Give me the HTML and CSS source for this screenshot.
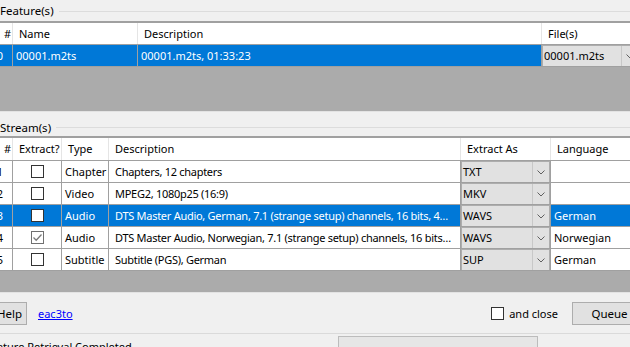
FILE: index.html
```html
<!DOCTYPE html>
<html lang="en">
<head>
  <meta charset="UTF-8">
  <title>eac3to Stream Selection</title>
  <link rel="stylesheet" href="styles.css">
</head>
<body>
  <div id="app">
    <div class="group-head"><span class="group-label">Feature(s)</span></div>
    <div class="grid feature-grid">
      <div class="row head">
        <div class="cell num">#</div>
        <div class="cell">Name</div>
        <div class="cell">Description</div>
        <div class="cell">File(s)</div>
      </div>
      <div class="row selected">
        <div class="cell num">0</div>
        <div class="cell">00001.m2ts</div>
        <div class="cell">00001.m2ts, 01:33:23</div>
        <div class="cell combo-cell">
          <div class="combo"><span class="combo-text">00001.m2ts</span><span class="combo-btn"><svg width="8" height="5" viewBox="0 0 8 5"><path d="M0.5 0.5 L4 4 L7.5 0.5" fill="none" stroke="#606060"/></svg></span></div>
        </div>
      </div>
      <div class="empty feature-empty"></div>
    </div>

    <div class="group-head stream-head"><span class="group-label">Stream(s)</span></div>
    <div class="grid stream-grid">
      <div class="row head">
        <div class="cell num">#</div>
        <div class="cell">Extract?</div>
        <div class="cell">Type</div>
        <div class="cell desc">Description</div>
        <div class="cell">Extract As</div>
        <div class="cell">Language</div>
      </div>
      <div class="row">
        <div class="cell num">1</div>
        <div class="cell check-cell"><span class="check"></span></div>
        <div class="cell">Chapter</div>
        <div class="cell desc">Chapters, 12 chapters</div>
        <div class="cell combo-cell"><div class="combo"><span class="combo-text">TXT</span><span class="combo-btn"><svg width="8" height="5" viewBox="0 0 8 5"><path d="M0.5 0.5 L4 4 L7.5 0.5" fill="none" stroke="#606060"/></svg></span></div></div>
        <div class="cell"></div>
      </div>
      <div class="row">
        <div class="cell num">2</div>
        <div class="cell check-cell"><span class="check"></span></div>
        <div class="cell">Video</div>
        <div class="cell desc">MPEG2, 1080p25 (16:9)</div>
        <div class="cell combo-cell"><div class="combo"><span class="combo-text">MKV</span><span class="combo-btn"><svg width="8" height="5" viewBox="0 0 8 5"><path d="M0.5 0.5 L4 4 L7.5 0.5" fill="none" stroke="#606060"/></svg></span></div></div>
        <div class="cell"></div>
      </div>
      <div class="row selected">
        <div class="cell num">3</div>
        <div class="cell check-cell"><span class="check"></span></div>
        <div class="cell">Audio</div>
        <div class="cell desc">DTS Master Audio, German, 7.1 (strange setup) channels, 16 bits, 4…</div>
        <div class="cell combo-cell"><div class="combo"><span class="combo-text">WAVS</span><span class="combo-btn"><svg width="8" height="5" viewBox="0 0 8 5"><path d="M0.5 0.5 L4 4 L7.5 0.5" fill="none" stroke="#606060"/></svg></span></div></div>
        <div class="cell">German</div>
      </div>
      <div class="row">
        <div class="cell num">4</div>
        <div class="cell check-cell"><span class="check checked"><svg width="11" height="11" viewBox="0 0 11 11"><path d="M1.5 5.5 L4.2 8.2 L9.5 2.5" fill="none" stroke="#7a7a7a" stroke-width="1.3"/></svg></span></div>
        <div class="cell">Audio</div>
        <div class="cell desc">DTS Master Audio, Norwegian, 7.1 (strange setup) channels, 16 bits…</div>
        <div class="cell combo-cell"><div class="combo"><span class="combo-text">WAVS</span><span class="combo-btn"><svg width="8" height="5" viewBox="0 0 8 5"><path d="M0.5 0.5 L4 4 L7.5 0.5" fill="none" stroke="#606060"/></svg></span></div></div>
        <div class="cell">Norwegian</div>
      </div>
      <div class="row">
        <div class="cell num">5</div>
        <div class="cell check-cell"><span class="check"></span></div>
        <div class="cell">Subtitle</div>
        <div class="cell desc">Subtitle (PGS), German</div>
        <div class="cell combo-cell"><div class="combo"><span class="combo-text">SUP</span><span class="combo-btn"><svg width="8" height="5" viewBox="0 0 8 5"><path d="M0.5 0.5 L4 4 L7.5 0.5" fill="none" stroke="#606060"/></svg></span></div></div>
        <div class="cell">German</div>
      </div>
      <div class="empty stream-empty"></div>
    </div>

    <div class="actions">
      <button class="btn help-btn">Help</button>
      <a class="link" href="#">eac3to</a>
      <label class="close-opt"><span class="check"></span>and close</label>
      <button class="btn queue-btn">Queue</button>
    </div>

    <div class="status">
      <span class="status-text">Feature Retrieval Completed</span>
      <div class="progress"></div>
    </div>
  </div>
</body>
</html>
```

FILE: styles.css
```css
body {
  margin: 0;
  background-color: #f0f0f0;
  font-family: "Noto Sans", sans-serif;
  font-size: 11px;
  color: #000;
  overflow: hidden;
}
#app {
  width: 630px;
  height: 347px;
  overflow: hidden;
}
.group-head {
  display: flex;
  align-items: center;
  height: 21px;
  font-size: 11.5px;
}
.group-head::after {
  content: "";
  flex: 1;
  border-top: 1px solid #dcdcdc;
  margin-left: 5px;
  margin-top: 1px;
}
.group-label {
  white-space: nowrap;
}
.stream-head {
  height: 24px;
  padding-top: 6px;
  box-sizing: border-box;
}
.grid {
  border-top: 2px solid #a0a0a0;
  border-bottom: 1px solid #e3e3e3;
  margin-left: -16px;
  width: 760px;
}
.row {
  display: grid;
  height: 22px;
  border-bottom: 1px solid #a0a0a0;
  box-sizing: border-box;
  background-color: #fff;
}
.feature-grid .row {
  grid-template-columns: 29px 125px 404px 98px;
}
.stream-grid .row {
  grid-template-columns: 29px 49px 47px 352px 90px 150px;
}
.stream-grid .head {
  height: 23px;
}
.cell {
  border-right: 1px solid #a0a0a0;
  padding-left: 3px;
  line-height: 21px;
  white-space: nowrap;
  overflow: hidden;
  text-overflow: ellipsis;
}
.cell.desc {
  padding-left: 6px;
  padding-right: 0;
  letter-spacing: -0.28px;
}
.head .cell {
  border-right-color: #e5e5e5;
  padding-left: 6px;
  letter-spacing: 0;
}
.num {
  text-align: right;
  padding-right: 9px;
}
.head .num {
  padding-right: 1px;
}
.selected {
  background-color: #0078d7;
  color: #fff;
}
.empty {
  background-color: #ababab;
}
.feature-empty {
  height: 44px;
}
.stream-empty {
  height: 21px;
}
.check-cell {
  display: flex;
  justify-content: center;
  align-items: center;
  padding-left: 0;
}
.check {
  width: 13px;
  height: 13px;
  box-sizing: border-box;
  border: 1px solid #333;
  background-color: #fff;
  display: inline-flex;
  align-items: center;
  justify-content: center;
}
.check.checked {
  border-color: #707070;
}
.combo-cell {
  padding-left: 0;
}
.combo {
  display: flex;
  height: 100%;
  box-sizing: border-box;
  border: 1px solid #adadad;
  border-bottom: none;
  background-color: #e1e1e1;
  color: #000;
}
.combo-text {
  flex: 1;
  padding-left: 1px;
  line-height: 20px;
  overflow: hidden;
}
.combo-btn {
  width: 16px;
  border-left: 1px solid #c8c8c8;
  display: flex;
  align-items: center;
  justify-content: center;
}
.actions {
  display: flex;
  align-items: center;
  height: 40px;
  border-bottom: 1px solid #dadada;
}
.btn {
  font-family: "Noto Sans", sans-serif;
  font-size: 11.5px;
  height: 23px;
  background-color: #e1e1e1;
  border: 1px solid #adadad;
  padding: 0;
  color: #000;
}
.help-btn {
  width: 35px;
  margin-left: -8px;
}
.link {
  color: #0000ff;
  margin-left: 11px;
}
.close-opt {
  display: flex;
  align-items: center;
  gap: 5px;
  margin-left: auto;
}
.close-opt .check {
  margin-top: 1px;
}
.queue-btn {
  width: 75px;
  margin-left: 14px;
  margin-right: -17px;
}
.status {
  display: flex;
  align-items: flex-start;
  height: 20px;
}
.status-text {
  margin-left: -15px;
  line-height: 20px;
  padding-top: 3px;
  width: 353px;
  white-space: nowrap;
}
.progress {
  width: 198px;
  height: 20px;
  margin-top: 2px;
  background-color: #e6e6e6;
  border: 1px solid #bcbcbc;
}
```
